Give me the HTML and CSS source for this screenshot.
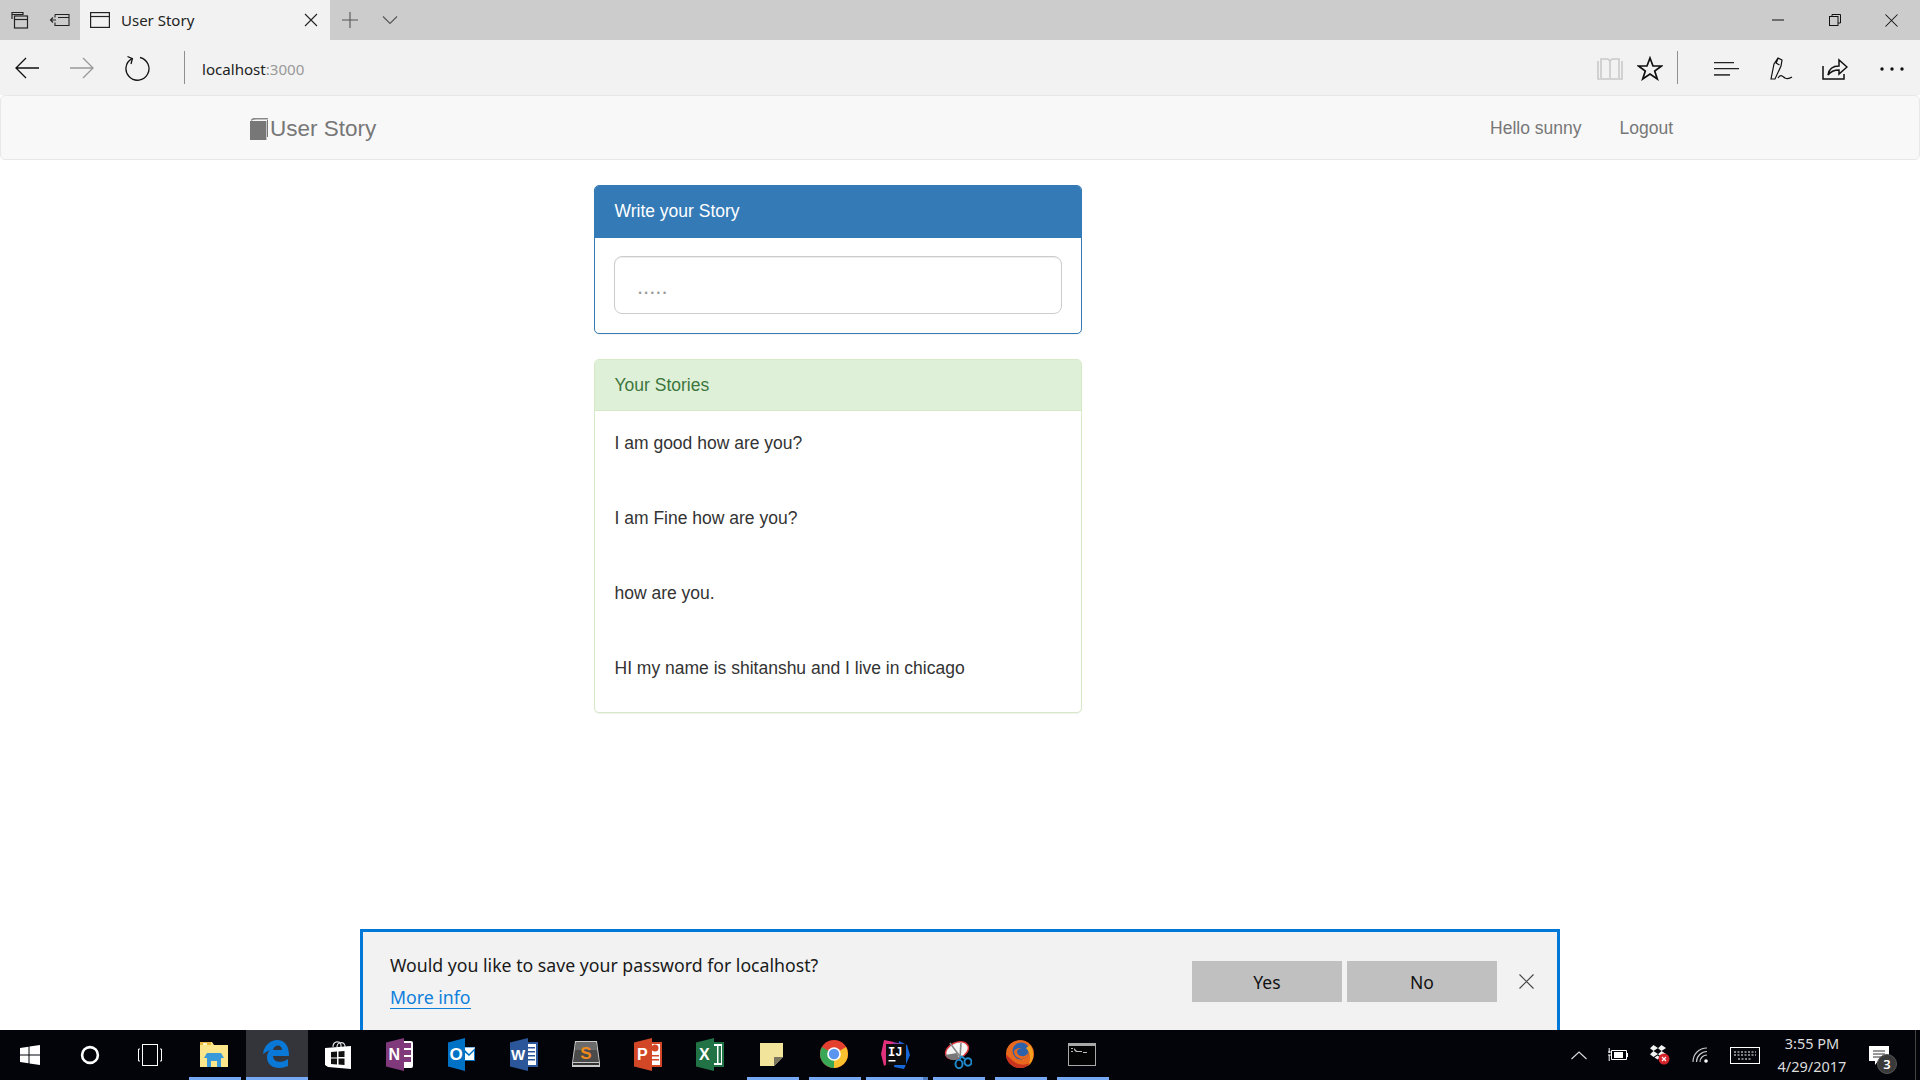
FILE: index.html
```html
<!DOCTYPE html>
<html lang="en">
<head>
  <meta charset="UTF-8">
  <title>User Story</title>
  <link rel="stylesheet" href="styles.css">
</head>
<body>
  <!-- browser tab strip -->
  <div class="tabstrip">
    <div class="strip-btn">
      <svg width="20" height="20" viewBox="0 0 20 20" fill="none" stroke="#222" stroke-width="1.2"><path d="M2 9V2.5h11V5M2 4.5h11"/><rect x="4.5" y="6" width="13" height="12" fill="#ccc"/><path d="M4.5 9.5h13"/></svg>
    </div>
    <div class="strip-btn">
      <svg width="22" height="20" viewBox="0 0 22 20" fill="none" stroke="#222" stroke-width="1.1"><path d="M6 4.5h14v11H6v-3M6 7.5v-3"/><path d="M7 10H1.5M4 7.5 1.5 10 4 12.5M9 7.5h11" /></svg>
    </div>
    <div class="tab">
      <svg width="20" height="16" viewBox="0 0 20 16" fill="none" stroke="#222" stroke-width="1.2"><rect x=".6" y=".6" width="18.8" height="14.8"/><path d="M.6 4.5h18.8"/></svg>
      <span class="tab-title">User Story</span>
      <svg class="tab-close" width="14" height="14" viewBox="0 0 14 14" stroke="#222" stroke-width="1.1"><path d="M1 1l12 12M13 1 1 13"/></svg>
    </div>
    <div class="strip-btn plus">
      <svg width="18" height="18" viewBox="0 0 18 18" stroke="#555" stroke-width="1.1"><path d="M9 1v16M1 9h16"/></svg>
    </div>
    <div class="strip-btn">
      <svg width="16" height="10" viewBox="0 0 16 10" fill="none" stroke="#555" stroke-width="1.1"><path d="M1 1.5l7 7 7-7"/></svg>
    </div>
    <div class="winctrls">
      <div class="winctrl"><svg width="12" height="2" viewBox="0 0 12 2" stroke="#111"><path d="M0 1h12"/></svg></div>
      <div class="winctrl"><svg width="12" height="12" viewBox="0 0 12 12" fill="none" stroke="#111"><path d="M3 2.5V.5h8.500v8.500H9"/><rect x=".5" y="2.500" width="8.500" height="9"/></svg></div>
      <div class="winctrl"><svg width="13" height="13" viewBox="0 0 13 13" stroke="#111" stroke-width="1.050"><path d="M.5.5l12 12M12.500.5l-12 12"/></svg></div>
    </div>
  </div>

  <!-- browser address bar -->
  <div class="toolbar">
    <div class="nav-btns">
      <svg width="26" height="24" viewBox="0 0 26 24" fill="none" stroke="#111" stroke-width="1.3"><path d="M25 12H2M12 2 2 12l10 10"/></svg>
      <svg width="26" height="24" viewBox="0 0 26 24" fill="none" stroke="#999" stroke-width="1.3"><path d="M1 12h23M14 2l10 10-10 10"/></svg>
      <svg width="26" height="26" viewBox="0 0 26 26" fill="none" stroke="#111" stroke-width="1.3"><path d="M8 3.600A11.500 11.500 0 1 0 16 2.500"/><path d="M3.500 1.500 8.400 3.600 7 9"/></svg>
    </div>
    <div class="sep"></div>
    <div class="url">localhost<span class="port">:3000</span></div>
    <div class="tool-right">
      <svg class="t-read" width="26" height="24" viewBox="0 0 26 24" fill="none" stroke="#c9c9c9" stroke-width="1.600"><path d="M1 4v18h24V4M4 21V2h7l2 2 2-2h7v19M13 4v17"/></svg>
      <svg class="t-star" width="26" height="25" viewBox="0 0 26 25" fill="none" stroke="#111" stroke-width="1.700"><path d="M13 2l3 8h8.500l-6.800 5 2.600 8L13 18l-7.300 5 2.600-8-6.800-5H10z"/></svg>
      <div class="sep sep-right"></div>
      <svg class="t-hub" width="26" height="16" viewBox="0 0 26 16"><path d="M1 1h20v1.200H1zM1 7h25v1.200H1z" fill="#222"/><path d="M1 13h16v1.800H1z" fill="#444"/></svg>
      <svg class="t-note" width="24" height="24" viewBox="0 0 24 24" fill="none" stroke="#111" stroke-width="1.200"><path d="M1 22 4 7l4-6 4 2-1 6-6 13zM6 6l3.500 2M8 1.500l-2 5"/><path d="M8 21c3-5 5-1 7 0s4 1 7-1"/></svg>
      <svg class="t-share" width="26" height="23" viewBox="0 0 26 23" fill="none" stroke="#111" stroke-width="1.500"><path d="M1 9v13h21v-5"/><path d="M6 18c1-7 6-9 11-9V3l8 7-8 7v-4c-5 0-8 1-11 5z"/></svg>
      <svg class="t-more" width="24" height="4" viewBox="0 0 24 4" fill="#111"><circle cx="2" cy="2" r="1.700"/><circle cx="12" cy="2" r="1.700"/><circle cx="22" cy="2" r="1.700"/></svg>
    </div>
  </div>

  <!-- the page itself -->
  <div class="page">
    <nav class="navbar">
      <a class="brand">
        <svg width="18" height="22" viewBox="0 0 18 22"><path d="M3 0h15v1.500H5.500L5 1.700H3.500L1 3V1.500z" fill="#8a8a8a"/><path d="M0 3h16.400v19H0z" fill="#777"/><path d="M17 2h1v17h-1z" fill="#777"/></svg>User Story
      </a>
      <div class="nav-links">
        <a>Hello sunny</a>
        <a>Logout</a>
      </div>
    </nav>

    <div class="content">
      <div class="panel panel-primary">
        <div class="panel-heading">Write your Story</div>
        <div class="panel-body">
          <input class="story-input" type="text" placeholder=".....">
        </div>
      </div>

      <div class="panel panel-success">
        <div class="panel-heading">Your Stories</div>
        <div class="panel-body stories">
          <p>I am good how are you?</p>
          <p>I am Fine how are you?</p>
          <p>how are you.</p>
          <p>HI my name is shitanshu and I live in chicago</p>
        </div>
      </div>
    </div>

    <div class="notify">
      <div class="notify-text">
        <div>Would you like to save your password for localhost?</div>
        <a class="notify-link">More info</a>
      </div>
      <div class="notify-actions">
        <button class="notify-btn">Yes</button>
        <button class="notify-btn">No</button>
        <svg class="notify-close" width="15" height="15" viewBox="0 0 15 15" stroke="#444" stroke-width="1.100"><path d="M.5.5l14 14M14.500.5l-14 14"/></svg>
      </div>
    </div>
  </div>

  <!-- windows taskbar -->
  <div class="taskbar">
    <div class="task-sys">
      <svg width="20" height="20" viewBox="0 0 20 20" fill="#fff"><path d="M0 2.900 8.500 1.700v7.800H0zM9.500 1.600 20 0v9.500H9.500zM0 10.500h8.500v7.800L0 17.100zM9.500 10.500H20V20L9.500 18.400z"/></svg>
    </div>
    <div class="task-sys">
      <svg width="20" height="20" viewBox="0 0 20 20" fill="none" stroke="#fff" stroke-width="2.600"><circle cx="10" cy="10" r="7.900"/></svg>
    </div>
    <div class="task-sys">
      <svg width="24" height="22" viewBox="0 0 24 22" fill="none" stroke="#fff" stroke-width="1"><rect x="4.500" y=".5" width="15" height="21"/><path d="M2 5H.5v12H2M22 5h1.500v12H22"/></svg>
    </div>

    <div class="task-app open">
      <svg width="28" height="26" viewBox="0 0 28 26"><path d="M0 1h12l2 3h14v22H0z" fill="#fce68c"/><path d="M0 1h11v3H0z" fill="#e8b93f"/><path d="M3 2h4v2H3z" fill="#fff6c6"/><path d="M7 12h14l3 5h-3v9h-4v-6h-6v6H7v-9H4z" fill="#3a9ad9"/></svg>
    </div>
    <div class="task-app active open">
      <svg width="26" height="28" viewBox="0 0 26 28"><path d="M0 14C1 5 8 0 14 0c8 0 12 6 12 16H10c0 6 8 8 15 3v7c-9 4-21 2-21-9 0-3 1-5 3-7-3 1-5 3-7 4zM10 10h9c0-6-8-6-9 0z" fill="#0a78d7"/></svg>
    </div>
    <div class="task-app">
      <svg width="26" height="29" viewBox="0 0 26 29"><path d="M8 7C8 1 15 0 16 5v3M12 7c0-5 7-6 8-1v3" fill="none" stroke="#ddd" stroke-width="1.200"/><path d="M0 8l26-2v23L3 27 0 25z" fill="#fff"/><path d="M6 12l6-.5v6H6zM13.500 11.400l6-.5v6.100h-6zM6 18.500h6v6l-6-.5zM13.500 18.500h6v6.500l-6-.5z" fill="#111"/></svg>
    </div>
    <div class="task-app">
      <svg width="27" height="33" viewBox="0 0 27 33"><path d="M16 3h9a2 2 0 0 1 2 2v23a2 2 0 0 1-2 2h-9z" fill="#fff"/><path d="M17 5h8v5h-8zM17 12h8v5h-8zM17 19h8v5h-8z" fill="#80397b"/><path d="M0 4.500 18 0v33L0 28.500z" fill="#80397b"/><text x="2.500" y="22" class="ico-letter" font-size="16">N</text></svg>
    </div>
    <div class="task-app">
      <svg width="27" height="33" viewBox="0 0 27 33"><path d="M14 9h13v14H14z" fill="#0072c6"/><path d="M15 10l6 6 6-6v-.5H15zM15 13v9h11v-9l-5 5z" fill="#fff"/><path d="M0 4.500 17 0v33L0 28.500z" fill="#0072c6"/><text x="1.500" y="22" class="ico-letter" font-size="17">O</text></svg>
    </div>
    <div class="task-app">
      <svg width="28" height="33" viewBox="0 0 28 33"><path d="M15 4h13v25H15z" fill="#2b579a"/><path d="M16 6h10v21H16z" fill="#fff"/><path d="M18 9h7v1.500h-7zM18 13h7v1.500h-7zM18 17h7v1.500h-7zM18 21h7v1.500h-7z" fill="#2b579a"/><path d="M0 4.500 18 0v33L0 28.500z" fill="#2b579a"/><text x="1" y="22" class="ico-letter" font-size="15">W</text></svg>
    </div>
    <div class="task-app">
      <svg width="28" height="28" viewBox="0 0 28 28"><path d="M3 1h22l3 22v4H0v-4z" fill="#c9c9c9"/><path d="M4 2h20l3 20H1z" fill="#4a4a4a"/><path d="M4 2h20l1 8H3z" fill="#6b6b6b"/><path d="M1 23h26v2H1z" fill="#333"/><text x="14" y="19" text-anchor="middle" class="ico-letter sublime-s" font-size="17">S</text></svg>
    </div>
    <div class="task-app">
      <svg width="28" height="33" viewBox="0 0 28 33"><path d="M15 4h13v25H15z" fill="#d24726"/><path d="M16 6h10v21H16z" fill="#fff"/><path d="M18 21h7v1.500h-7zM18 17h7v1.500h-7z" fill="#d24726"/><circle cx="21" cy="10" r="3.500" fill="#d24726"/><path d="M0 4.500 18 0v33L0 28.500z" fill="#d24726"/><text x="3" y="22" class="ico-letter" font-size="16">P</text></svg>
    </div>
    <div class="task-app">
      <svg width="28" height="33" viewBox="0 0 28 33"><path d="M15 4h13v25H15z" fill="#217346"/><path d="M16 6h10v21H16z" fill="#fff"/><path d="M18 8h3v17h-3zM22.500 8H25v17h-2.500z" fill="#217346"/><path d="M0 4.500 18 0v33L0 28.500z" fill="#217346"/><text x="3" y="22" class="ico-letter" font-size="16">X</text></svg>
    </div>
    <div class="task-app open">
      <svg width="23" height="23" viewBox="0 0 23 23"><path d="M0 0h23v14l-9 9H0z" fill="#f2e59b"/><path d="M23 14h-9v9z" fill="#7a7560"/></svg>
    </div>
    <div class="task-app open">
      <svg width="28" height="28" viewBox="0 0 28 28"><circle cx="14" cy="14" r="14" fill="#e4402f"/><path d="M14 14 26.100 7A14 14 0 0 1 14 28z" fill="#fbc02d"/><path d="M14 14 14 28A14 14 0 0 1 1.900 7z" fill="#3aa757"/><circle cx="14" cy="14" r="6.800" fill="#fff"/><circle cx="14" cy="14" r="5.200" fill="#5a95f0"/></svg>
    </div>
    <div class="task-app open split">
      <svg width="29" height="29" viewBox="0 0 29 29"><path d="M3 0 13 2 9 22l-6 4-3-12z" fill="#e0317c"/><path d="M18 1l8 4 3 10-6 14-10-2z" fill="#1668d8"/><path d="M12 2 22 4 25 20 8 25z" fill="#8a3ea8"/><path d="M5 4h20v21H5z" fill="#0c0c0c"/><text x="7" y="15.500" class="ico-mono" font-size="12">IJ</text><path d="M7.500 20h7v1.500h-7z" fill="#fff"/></svg>
    </div>
    <div class="task-app open">
      <svg width="28" height="29" viewBox="0 0 28 29"><ellipse cx="13" cy="10.500" rx="12" ry="8" transform="rotate(-24 13 10.500)" fill="#f4f4f4" stroke="#d8333a" stroke-width="1.500"/><path d="M1 15c4 5 9 7 14 3l-2-5z" fill="#777"/><path d="M6 3l11 15M17 3l-1 15" stroke="#888" stroke-width="1.600"/><g fill="none" stroke="#1f8ac9" stroke-width="2"><ellipse cx="15" cy="24" rx="3.500" ry="4.200"/><ellipse cx="24" cy="22" rx="3.500" ry="3.800"/><path d="M16 19l1-3M21 19l-4-3"/></g></svg>
    </div>
    <div class="task-app open">
      <svg width="28" height="28" viewBox="0 0 28 28"><circle cx="14" cy="14" r="14" fill="#e8681d"/><circle cx="15" cy="11" r="8.500" fill="#2d62ab"/><path d="M8 11c0 5 4 8 8 8s7-3 7-8c-1 3-4 6-7 5-3 0-5-2-5-5 1-2 3-3 5-2-2-2-6-1-8 2z" fill="#e8681d"/><path d="M24 5c5 7 4 16-2 21 3-6 3-13-2-18z" fill="#f6a01e"/><path d="M0 15a14 14 0 0 0 14 13c4 0 8-2 10-5-6 3-13 2-18-3-3-3-5-5-6-5z" fill="#c8321e"/></svg>
    </div>
    <div class="task-app open">
      <svg width="28" height="23" viewBox="0 0 28 23"><path d="M0 0h28v23H0z" fill="#a8a8a8"/><path d="M1 3h26v19H1z" fill="#030303"/><path d="M3 5h2v1H3zM3 8h2v1H3zM6 5l3 3h5v1H8L6 7zM15 9h4v1h-4z" fill="#bbb"/></svg>
    </div>

    <div class="tray">
      <svg width="16" height="9" viewBox="0 0 16 9" fill="none" stroke="#ddd" stroke-width="1.100"><path d="M.5 8 8 1l7.500 7"/></svg>
      <svg width="20" height="14" viewBox="0 0 20 14"><path d="M3.500 2.500h15v9h-15z" fill="none" stroke="#fff"/><path d="M6 4h9v6H6zM19 5h1v4h-1z" fill="#fff"/><path d="M0 4h3M0 7h3" stroke="#fff"/><path d="M1.200 0v5M1.200 7v6" stroke="#fff"/></svg>
      <svg width="20" height="20" viewBox="0 0 20 20"><path d="M3.500 0 8 3 3.500 6 0 3.300zM11.500 0 16 3l-4.500 3L8 3.300zM3.500 6 8 9l-4.500 3L0 9.300zM11.500 6 16 9l-4.500 3L8 9.300zM7.500 10.500l3 2-3 2-3-2z" fill="#f2f2f2"/><circle cx="14" cy="14" r="5.500" fill="#d4232a"/><path d="M12 12l4 4M16 12l-4 4" stroke="#fff" stroke-width="1.200"/></svg>
      <svg width="16" height="16" viewBox="0 0 16 16" fill="none" stroke="#ccc" stroke-width="1.100"><path d="M1 15C1 7 7 1 15 1M4.500 15c0-6 5-10.500 10.500-10.500M8 15c0-4 3-7 7-7"/><circle cx="14" cy="14" r="1.800" fill="#fff" stroke="none"/></svg>
      <svg width="30" height="17" viewBox="0 0 30 17" fill="none" stroke="#fff"><rect x=".5" y=".5" width="29" height="16"/><path d="M4 5h22M4 8h22M8 12h14" stroke-dasharray="2 1.500"/></svg>
    </div>
    <div class="clock">
      <div>3:55 PM</div>
      <div>4/29/2017</div>
    </div>
    <div class="action-center">
      <svg width="20" height="19" viewBox="0 0 20 19"><path d="M0 0h20v15H9l-3 4v-4H0z" fill="#fff"/><path d="M4 5h12M4 8h12M4 11h8" stroke="#333"/></svg>
      <span class="badge">3</span>
    </div>
    <div class="show-desktop"></div>
  </div>
</body>
</html>
```

FILE: styles.css
```css
* { box-sizing: border-box; }
html, body { height: 100%; }
body { margin: 0; height: 1080px; overflow: hidden; display: flex; flex-direction: column; font-family: "Liberation Sans", Arial, sans-serif; font-size: 17.5px; color: #333; background: #fff; }

/* tab strip */
.tabstrip { height: 40px; flex: none; display: flex; align-items: center; background: #ccc; }
.strip-btn { width: 40px; height: 40px; display: flex; align-items: center; justify-content: center; }
.tab { width: 250px; height: 40px; display: flex; align-items: center; padding: 0 12px 0 10px; background: #f2f2f2; font-family: "Noto Sans", sans-serif; font-size: 15px; color: #222; }
.tab-title { margin-left: 11px; flex: 1; }
.winctrls { margin-left: auto; display: flex; }
.winctrl { width: 57px; height: 40px; display: flex; align-items: center; justify-content: center; }

/* address bar */
.toolbar { height: 55px; flex: none; display: flex; align-items: center; background: #f2f2f2; }
.nav-btns { display: flex; align-items: center; gap: 29px; padding-left: 14px; }
.sep { width: 1px; height: 33px; background: #8f8f8f; margin-left: 34px; }
.url { margin-left: 17px; padding-top: 2px; font-family: "Noto Sans", sans-serif; font-size: 15.100px; color: #222; }
.port { color: #999; }
.tool-right { margin-left: auto; display: flex; align-items: center; padding: 2px 16px 0 0; }
.tool-right .sep { margin-top: -2px; }
.t-star { margin-left: 14px; }
.sep-right { margin-left: 14px; }
.t-hub { margin-left: 35px; }
.t-note { margin-left: 31px; }
.t-share { margin-left: 28px; }
.t-more { margin-left: 32px; }

/* page */
.page { flex: 1; min-height: 0; display: flex; flex-direction: column; }
.navbar { height: 65px; flex: none; display: flex; align-items: center; background: #f8f8f8; border: 1px solid #e7e7e7; border-radius: 5px; padding: 2px 246px 0 249px; color: #777; }
.brand { display: flex; align-items: center; gap: 2px; font-size: 22.500px; }
.nav-links { margin-left: auto; display: flex; gap: 38px; }

.content { width: 488px; margin: 25px 0 0 594px; }
.panel { border: 1px solid transparent; border-radius: 5px; margin-bottom: 25px; background: #fff; box-shadow: 0 1px 1px rgba(0,0,0,.05); overflow: hidden; }
.panel-heading { height: 51px; padding: 0 19.500px; line-height: 50px; }
.panel-primary { border-color: #337ab7; }
.panel-primary .panel-heading { height: 52px; background: #337ab7; color: #fff; }
.panel-success { border-color: #d6e9c6; }
.panel-success .panel-heading { background: #dff0d8; color: #3c763d; border-bottom: 1px solid #d6e9c6; }
.panel-body { padding: 18px 19px 19px; }
.story-input { display: block; width: 100%; height: 58px; padding: 3px 22px 0; border: 1.500px solid #ccc; border-radius: 8px; font-family: inherit; font-size: 22px; color: #555; outline: none; box-shadow: inset 0 1px 1px rgba(0,0,0,.075); }
.story-input::placeholder { color: #999; }
.stories { padding: 20px 19.500px 5px; }
.stories p { margin: 0 0 50px; height: 25px; line-height: 25px; }
.stories p:last-child { margin-bottom: 26px; }

/* save password bar */
.notify { margin: auto auto 0; width: 1200px; height: 101px; display: flex; flex: none; justify-content: space-between; background: #f2f2f2; border: 3px solid #0078d7; border-bottom: 0; font-family: "Noto Sans", sans-serif; font-size: 17.700px; color: #1a1a1a; }
.notify-text { padding: 20px 0 0 27px; line-height: 26px; }
.notify-link { display: inline-block; margin-top: 8px; color: #0f7fdc; border-bottom: 1px solid #0f7fdc; line-height: 22px; }
.notify-actions { display: flex; align-items: flex-start; gap: 5px; padding: 29px 23px 0 0; }
.notify-btn { width: 150px; height: 41px; border: 0; background: #c0c0c0; font-family: inherit; font-size: 17.500px; color: #111; }
.notify-close { margin: 13px 0 0 17px; }

/* taskbar */
.taskbar { height: 50px; flex: none; display: flex; align-items: stretch; background: #02040a; font-family: "Noto Sans", sans-serif; color: #ddd; }
.task-sys { width: 60px; display: flex; align-items: center; justify-content: center; }
.task-app { position: relative; width: 62px; padding: 0 3px 2px 0; display: flex; align-items: center; justify-content: center; flex: none; }
.task-sys + .task-app { margin-left: 4px; }
.task-app.open::after { content: ""; position: absolute; left: 5px; right: 5px; bottom: 0; height: 3px; background: #76a9f5; }
.task-app.active { background: #33353a; }
.task-app.active::after { left: 0; right: 0; }
.task-app.split::after { left: 0; right: 5px; box-shadow: 5px 0 0 #4f7cbe; }
.ico-letter { font-family: "Liberation Sans", sans-serif; font-weight: bold; fill: #fff; }
.sublime-s { fill: #f08a1d; }
.ico-mono { font-family: "Liberation Mono", monospace; font-weight: bold; fill: #fff; }
.tray { margin-left: auto; display: flex; align-items: center; gap: 22px; }
.tray svg:first-child { margin-right: -1px; }
.clock { width: 90px; margin-left: 7px; text-align: center; font-size: 14.500px; line-height: 23px; padding-top: 2px; white-space: nowrap; }
.action-center { position: relative; width: 58px; padding-right: 14px; display: flex; align-items: center; justify-content: center; }
.badge { position: absolute; left: 20px; top: 24px; width: 20px; height: 20px; border-radius: 50%; background: #3a3a3a; border: 1px solid #555; color: #fff; font-size: 13px; line-height: 18px; text-align: center; font-weight: 600; }
.show-desktop { width: 5px; border-left: 1px solid #444; }
```
